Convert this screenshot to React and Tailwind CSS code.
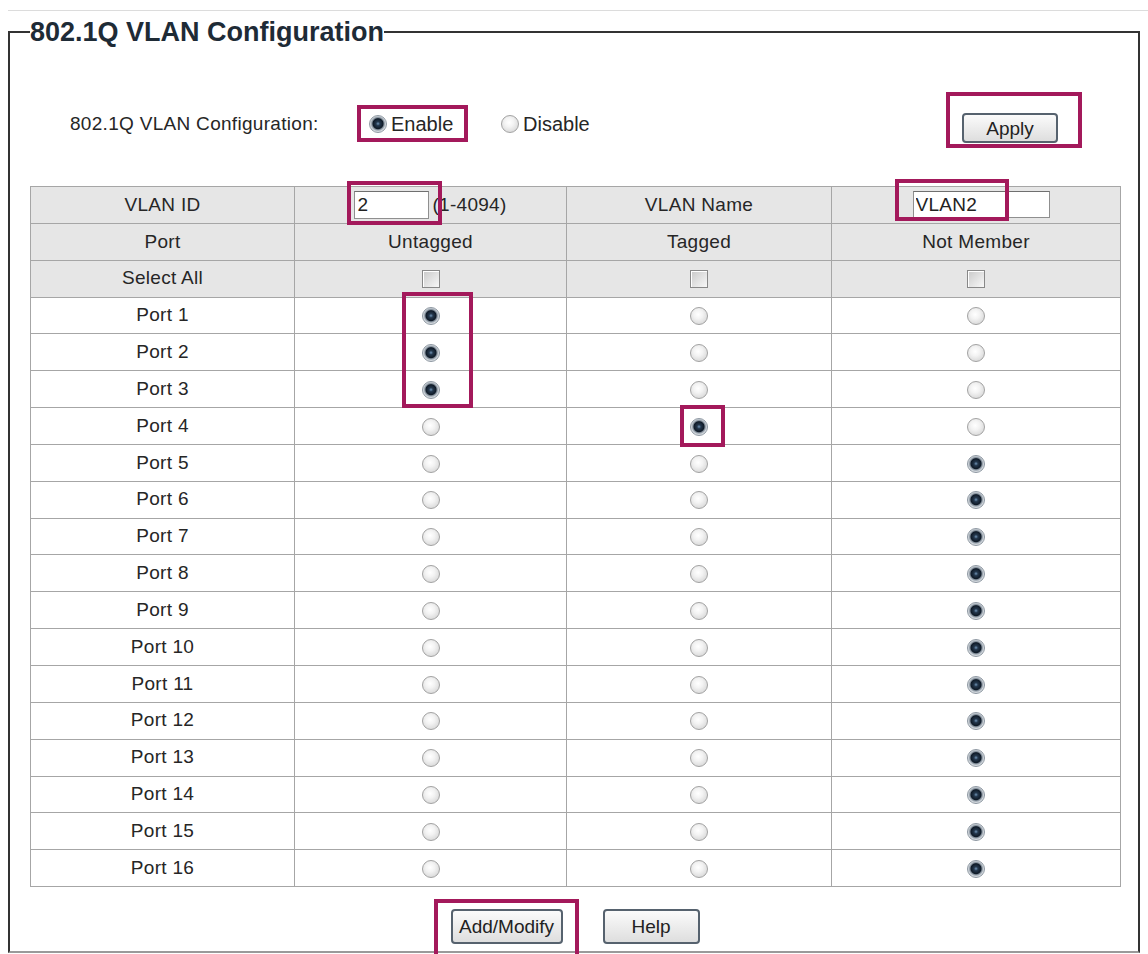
import React from 'react';

const PINK = 'border-[#a3195b]';

const Radio = ({ checked }) =>
    checked ? (
        <span className="inline-block w-[18px] h-[18px] rounded-full border border-[#8f99a3] bg-[radial-gradient(circle_at_50%_48%,#7094b6_0,#24374c_2px,#0f1a27_5px,#7f8b97_6px,#cdd3d9_7.5px,#eef0f2_9px)] align-middle" />
    ) : (
        <span className="inline-block w-[18px] h-[18px] rounded-full border border-[#a3a3a3] bg-[radial-gradient(circle_at_45%_40%,#ffffff_0,#f3f3f3_35%,#cccccc_100%)] align-middle" />
    );

const Checkbox = () => (
    <span className="inline-block w-[18px] h-[18px] border border-[#888888] bg-[linear-gradient(135deg,#c9c9c9,#f8f8f8)] shadow-[inset_1px_1px_0_#ffffff] align-middle" />
);

const Button = ({ children, className = '' }) => (
    <button
        className={`h-[30px] rounded-[4px] border-2 border-[#56626e] bg-[linear-gradient(#fbfbfb,#dedede)] text-[19px] leading-none text-[#222] ${className}`}
    >
        {children}
    </button>
);

const ports = Array.from({ length: 16 }, (_, i) => i + 1);

const membership = (n) => {
    if (n <= 3) return 'untagged';
    if (n === 4) return 'tagged';
    return 'none';
};

const cell = 'border border-[#a6a6a6] h-[36.85px] p-0 text-center align-middle';

export default function App() {
    return (
        <div className="w-[1148px] h-[954px] overflow-hidden bg-white font-['Liberation_Sans',Arial,sans-serif] text-[#262626]">
            <div className="ml-[8px] mt-[10px] border-t border-[#dcdcdc] pt-[6px]">
                <fieldset className="mr-[8px] border-2 border-[#333] border-b-[#9a9a9a] pb-[7px]">
                    <legend className="ml-[20px] p-0 text-[27px] leading-[30px] font-bold text-[#1e2b36]">
                        802.1Q VLAN Configuration
                    </legend>

                    <div className="mt-[45px] flex items-start h-[56px] pl-[60px] pr-[56px]">
                        <div className="w-[287px] mt-[21px] text-[19px] leading-[22px] tracking-[0.3px]">
                            802.1Q VLAN Configuration:
                        </div>
                        <div className={`mt-[13px] h-[37px] w-[111px] border-4 ${PINK} flex items-center pl-[8px] gap-[4px] text-[20px]`}>
                            <Radio checked />
                            <span>Enable</span>
                        </div>
                        <div className="mt-[13px] h-[37px] ml-[33px] flex items-center gap-[4px] text-[20px]">
                            <Radio />
                            <span>Disable</span>
                        </div>
                        <div className={`ml-auto h-[56px] w-[136px] border-4 ${PINK} pt-[17px] pl-[12px]`}>
                            <Button className="w-[96px]">Apply</Button>
                        </div>
                    </div>

                    <div className="relative mt-[38px] ml-[20px] w-[1090px]">
                        <table className="w-[1090px] border-collapse table-fixed text-[19px] tracking-[0.3px]">
                            <colgroup>
                                <col className="w-[264px]" />
                                <col className="w-[272px]" />
                                <col className="w-[265px]" />
                                <col className="w-[289px]" />
                            </colgroup>
                            <tbody>
                                <tr className="bg-[#e6e6e6]">
                                    <td className={cell}>VLAN ID</td>
                                    <td className={cell}>
                                        <div className="flex items-center justify-center">
                                            <input
                                                readOnly
                                                value="2"
                                                className="w-[75px] h-[28px] bg-white border border-[#8f8f8f] border-t-[#6f6f6f] px-[2px] text-[19px] text-[#222] outline-none"
                                            />
                                            <span className="ml-[3px]">(1-4094)</span>
                                        </div>
                                    </td>
                                    <td className={cell}>VLAN Name</td>
                                    <td className={cell}>
                                        <div className="flex items-center justify-center pl-[10px]">
                                            <input
                                                readOnly
                                                value="VLAN2"
                                                className="w-[137px] h-[27px] bg-white border border-[#8f8f8f] border-t-[#6f6f6f] px-[2px] text-[19px] text-[#222] outline-none"
                                            />
                                        </div>
                                    </td>
                                </tr>
                                <tr className="bg-[#e6e6e6]">
                                    <td className={cell}>Port</td>
                                    <td className={cell}>Untagged</td>
                                    <td className={cell}>Tagged</td>
                                    <td className={cell}>Not Member</td>
                                </tr>
                                <tr className="bg-[#e6e6e6]">
                                    <td className={cell}>Select All</td>
                                    <td className={cell}><Checkbox /></td>
                                    <td className={cell}><Checkbox /></td>
                                    <td className={cell}><Checkbox /></td>
                                </tr>
                                {ports.map((n) => {
                                    const m = membership(n);
                                    return (
                                        <tr key={n} className="bg-white">
                                            <td className={cell}>Port {n}</td>
                                            <td className={cell}><Radio checked={m === 'untagged'} /></td>
                                            <td className={cell}><Radio checked={m === 'tagged'} /></td>
                                            <td className={cell}><Radio checked={m === 'none'} /></td>
                                        </tr>
                                    );
                                })}
                            </tbody>
                        </table>

                        {/* highlight boxes drawn over the table */}
                        <div className={`absolute left-[317px] top-[-5px] w-[95px] h-[44px] border-4 ${PINK}`} />
                        <div className={`absolute left-[865px] top-[-7px] w-[114px] h-[42px] border-4 ${PINK}`} />
                        <div className={`absolute left-[372px] top-[106px] w-[71px] h-[116px] border-4 ${PINK}`} />
                        <div className={`absolute left-[650px] top-[219px] w-[45px] h-[42px] border-4 ${PINK}`} />

                        <div className="mt-[22px] flex justify-center gap-[40px]">
                            <div className="relative">
                                <Button className="w-[112px] h-[35px]">Add/Modify</Button>
                                <div className={`absolute left-[-17px] top-[-10px] w-[145px] h-[60px] border-4 ${PINK}`} />
                            </div>
                            <Button className="w-[97px] h-[35px]">Help</Button>
                        </div>
                    </div>
                </fieldset>
            </div>
        </div>
    );
}
